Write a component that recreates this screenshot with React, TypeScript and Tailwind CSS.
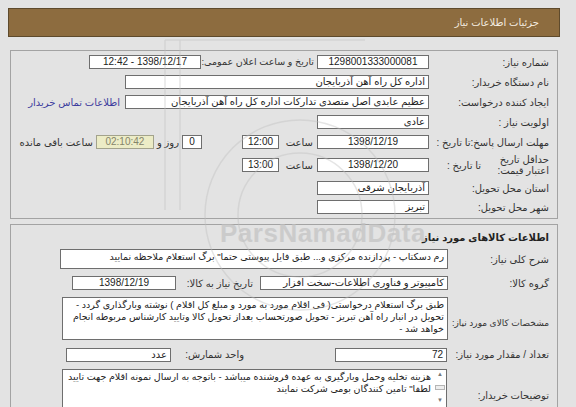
import React from 'react'

const font = { fontFamily: '"Liberation Sans", "DejaVu Sans", sans-serif' }

function Field({ w, children, className = '' }: { w: string; children?: React.ReactNode; className?: string }) {
  return (
    <div
      className={`h-[14px] shrink-0 border border-[#6e6e6e] bg-white px-[3px] text-[10px] leading-[12px] text-[#222] whitespace-nowrap overflow-hidden ${w} ${className}`}
    >
      {children}
    </div>
  )
}

function Row({ label, labelW, h = 'h-[20px]', children }: { label: React.ReactNode; labelW: string; h?: string; children?: React.ReactNode }) {
  return (
    <div className={`flex items-center ${h}`}>
      <div className={`shrink-0 whitespace-nowrap pr-2 text-[10px] text-[#333] ${labelW}`}>{label}</div>
      <div className="flex items-center whitespace-nowrap">{children}</div>
    </div>
  )
}

function TextBox({ w, h, children, scroll }: { w: string; h: string; children?: React.ReactNode; scroll?: boolean }) {
  return (
    <div className={`shrink-0 flex items-start overflow-hidden border border-[#6e6e6e] bg-white ${w} ${h}`}>
      {scroll && (
        <div className="h-[34px] w-[12px] shrink-0 flex flex-col items-center justify-between py-[1px] text-[6px] leading-none text-[#777]">
          <span>▲</span>
          <span className="h-[5px] w-[10px] border border-[#b5b5b5] bg-[#eee]" />
          <span>▼</span>
        </div>
      )}
      <div className="flex-1 px-[3px] pt-[1px] text-[9.5px] leading-[12px] text-[#222]">{children}</div>
    </div>
  )
}

export default function App() {
  return (
    <div dir="rtl" style={font} className="relative h-[407px] w-[576px] overflow-hidden bg-[#e3e3e3]">
      <div className="pt-2 pl-2 pr-4">
        {/* عنوان */}
        <div className="flex h-[29px] items-center border border-[#5e4a2c] bg-[#8d6c3f] pr-5 text-[10px] text-[#f4ede0]">
          جزئیات اطلاعات نیاز
        </div>

        {/* اطلاعات نیاز */}
        <div className="mx-[2px] mt-[13px] border border-[#a3a3a3] pt-[1px] pb-[2px]">
          <Row label="شماره نیاز:" labelW="w-[126px]">
            <Field w="w-[112px] mr-[2px]" className="text-center">1298001333000081</Field>
            <div className="mr-[3px] w-[110px] text-[9.5px] text-[#333]">تاریخ و ساعت اعلان عمومی:</div>
            <Field w="w-[112px] mr-[3px]" className="text-center">1398/12/17 - 12:42</Field>
          </Row>
          <Row label="نام دستگاه خریدار:" labelW="w-[126px]">
            <Field w="w-[304px] mr-[2px]">اداره کل راه آهن آذربایجان</Field>
          </Row>
          <Row label="ایجاد کننده درخواست:" labelW="w-[126px]">
            <Field w="w-[304px] mr-[2px]">عظیم عابدی اصل متصدی تدارکات اداره کل راه آهن آذربایجان</Field>
            <a className="mr-[5px] text-[10px] text-[#3d3d9e]">اطلاعات تماس خریدار</a>
          </Row>
          <Row label="اولویت نیاز :" labelW="w-[126px]">
            <Field w="w-[112px] mr-[2px]">عادی</Field>
          </Row>
          <Row
            label={
              <div className="flex justify-between pl-2">
                <span>مهلت ارسال پاسخ:</span>
                <span>تا تاریخ :</span>
              </div>
            }
            labelW="w-[126px]"
          >
            <Field w="w-[112px] mr-[2px]" className="text-center">1398/12/19</Field>
            <span className="mr-[4px] w-[28px] text-[10px] text-[#333]">ساعت</span>
            <Field w="w-[37px] mr-[6px]" className="text-center">12:00</Field>
            <Field w="w-[20px] mr-[40px]" className="text-center">0</Field>
            <span className="mr-[3px] text-[10px] text-[#333]">روز و</span>
            <Field w="w-[58px] mr-[3px]" className="!border-[#a3a38c] !bg-[#ececc6] !text-[#85856a] text-center">02:10:42</Field>
            <span className="mr-[3px] text-[10px] text-[#333]">ساعت باقی مانده</span>
          </Row>
          <Row
            h="h-[26px]"
            label={
              <div className="flex items-center justify-between pl-2">
                <span className="w-[72px] whitespace-normal leading-[11px]">حداقل تاریخ اعتبار قیمت:</span>
                <span className="pl-[8px]">تا تاریخ :</span>
              </div>
            }
            labelW="w-[126px]"
          >
            <Field w="w-[112px] mr-[2px]" className="text-center">1398/12/20</Field>
            <span className="mr-[4px] w-[28px] text-[10px] text-[#333]">ساعت</span>
            <Field w="w-[37px] mr-[6px]" className="text-center">13:00</Field>
          </Row>
          <Row label="استان محل تحویل:" labelW="w-[126px]">
            <Field w="w-[112px] mr-[2px]">آذربایجان شرقی</Field>
          </Row>
          <Row label="شهر محل تحویل:" labelW="w-[126px]" h="h-[18px]">
            <Field w="w-[112px] mr-[2px]">تبریز</Field>
          </Row>
        </div>

        {/* کالاها */}
        <div className="mx-[2px] mt-[5px] h-[200px] border border-[#a3a3a3] pt-[5px]">
          <div className="pr-2 text-[10px] font-bold text-[#222]">اطلاعات کالاهای مورد نیاز</div>
          <div className="mt-[4px] flex items-center">
            <div className="w-[107px] shrink-0 whitespace-nowrap pr-2 text-[10px] text-[#333]">شرح کلی نیاز:</div>
            <TextBox w="w-[388px] mr-[2px]" h="h-[20px]">
              رم دسکتاپ - پردازنده مرکزی و... طبق فایل پیوستی حتما" برگ استعلام ملاحظه نمایید
            </TextBox>
          </div>
          <div className="flex h-[28px] items-center">
            <div className="w-[107px] shrink-0 whitespace-nowrap pr-2 text-[10px] text-[#333]">گروه کالا:</div>
            <Field w="w-[188px] mr-[2px]">کامپیوتر و فناوری اطلاعات-سخت افزار</Field>
            <span className="mr-[7px] w-[70px] whitespace-nowrap text-[10px] text-[#333]">تاریخ نیاز به کالا:</span>
            <Field w="w-[104px] mr-[7px]" className="text-center">1398/12/19</Field>
          </div>
          <div className="flex items-center">
            <div className="w-[107px] shrink-0 whitespace-nowrap pr-2 pt-[10px] text-[9px] text-[#333]">مشخصات کالای مورد نیاز:</div>
            <TextBox w="w-[386px] mr-[2px]" h="h-[43px]">
              طبق برگ استعلام درخواستی( فی اقلام مورد به مورد و مبلغ کل اقلام ) نوشته وبارگذاری گردد - تحویل در انبار راه آهن تبریز - تحویل صورتحساب بعداز تحویل کالا وتایید کارشناس مربوطه انجام خواهد شد -
            </TextBox>
          </div>
          <div className="flex h-[29px] items-center">
            <div className="w-[107px] shrink-0 whitespace-nowrap pr-2 text-[10px] text-[#333]">تعداد / مقدار مورد نیاز:</div>
            <Field w="w-[112px] mr-[3px]">72</Field>
            <span className="mr-[91px] w-[60px] whitespace-nowrap text-[10px] text-[#333]">واحد شمارش:</span>
            <Field w="w-[105px] mr-[13px]">عدد</Field>
          </div>
          <div className="flex items-start">
            <div className="w-[107px] shrink-0 whitespace-nowrap pr-2 pt-[19px] text-[10px] text-[#333]">توضیحات خریدار:</div>
            <TextBox w="w-[385px] mr-[3px]" h="h-[60px]" scroll>
              هزینه تخلیه وحمل وبارگیری به عهده فروشنده میباشد - باتوجه به ارسال نمونه اقلام جهت تایید لطفا" تامین کنندگان بومی شرکت نمایند
            </TextBox>
          </div>
        </div>
      </div>

      {/* واترمارک */}
      <div className="pointer-events-none absolute inset-0">
        <svg className="absolute inset-0" width="576" height="407" fill="none" stroke="#bdbdbd" strokeOpacity="0.4" strokeWidth="1.5">
          <circle cx="300" cy="215" r="95" />
          <circle cx="300" cy="215" r="62" />
          <path d="M165 40 v170 M180 40 v170 M165 40 h200" />
        </svg>
        <div
          dir="ltr"
          className="absolute left-[220px] top-[220px] text-[26px] font-bold leading-none tracking-[0.5px] text-[#c2c2c2] opacity-70"
        >
          ParsNamadData
        </div>
      </div>
    </div>
  )
}
